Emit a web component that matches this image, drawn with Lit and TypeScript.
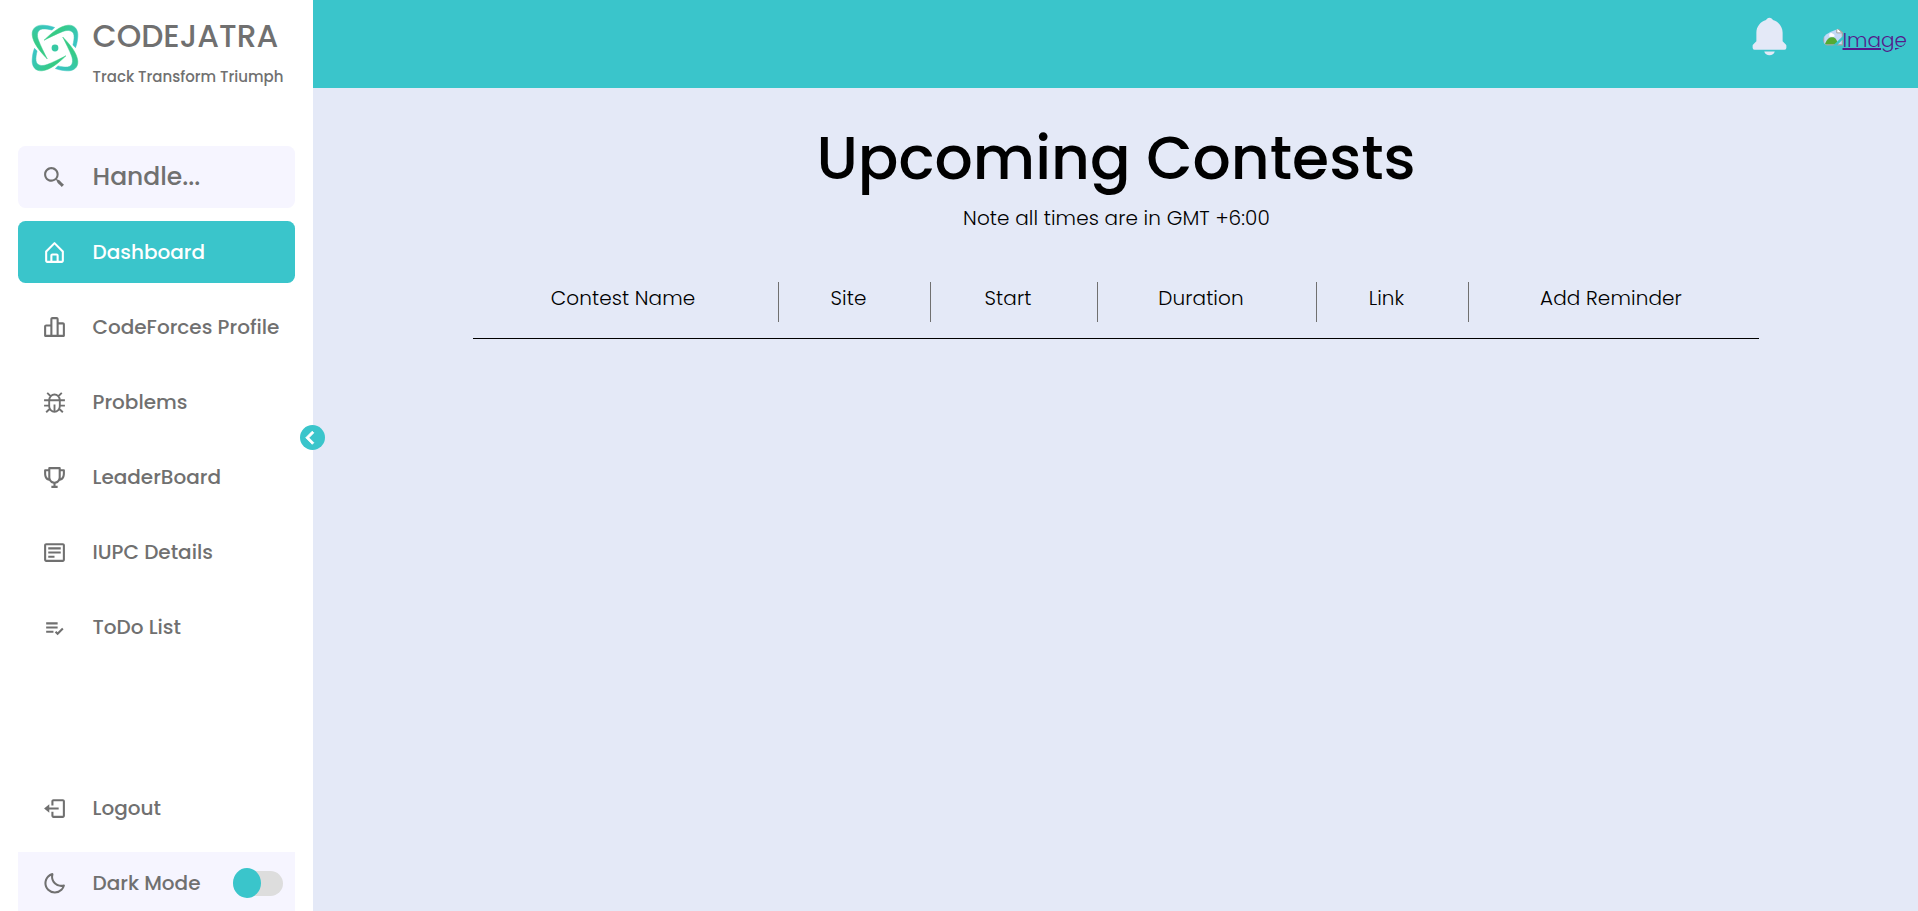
import { LitElement, html, css, svg } from 'lit';
import { customElement, property } from 'lit/decorators.js';
import { classMap } from 'lit/directives/class-map.js';

const ICONS: Record<string, string> = {
  search:
    'M19.023 16.977a35.13 35.13 0 0 1-1.367-1.384c-.372-.378-.596-.653-.596-.653l-2.8-1.337A6.962 6.962 0 0 0 16 9c0-3.859-3.14-7-7-7S2 5.141 2 9s3.14 7 7 7c1.763 0 3.37-.66 4.603-1.739l1.337 2.8s.275.224.653.596c.387.363.896.854 1.384 1.367l1.358 1.392.604.646 2.121-2.121-.646-.604c-.379-.372-.885-.866-1.391-1.36zM9 14c-2.757 0-5-2.243-5-5s2.243-5 5-5 5 2.243 5 5-2.243 5-5 5z',
  home:
    'M5 22h14c1.103 0 2-.897 2-2v-9a1 1 0 0 0-.293-.707l-8-8a1 1 0 0 0-1.414 0l-8 8A1 1 0 0 0 3 11v9c0 1.103.897 2 2 2zm5-2v-5h4v5h-4zm-5-8.586 7-7 7 7V20h-3v-5c0-1.103-.897-2-2-2h-4c-1.103 0-2 .897-2 2v5H5v-8.586z',
  chart:
    'M20 7h-4V4c0-1.103-.897-2-2-2h-4c-1.103 0-2 .897-2 2v5H4c-1.103 0-2 .897-2 2v9a1 1 0 0 0 1 1h18a1 1 0 0 0 1-1V9c0-1.103-.897-2-2-2zM4 11h4v8H4v-8zm6-1V4h4v15h-4v-9zm10 9h-4V9h4v10z',
  trophy:
    'M21 4h-3V3a1 1 0 0 0-1-1H7a1 1 0 0 0-1 1v1H3a1 1 0 0 0-1 1v3c0 4.31 1.799 6.91 4.819 7.012A6.001 6.001 0 0 0 11 17.91V20H9v2h6v-2h-2v-2.09a6.01 6.01 0 0 0 4.181-2.898C20.201 14.91 22 12.31 22 8V5a1 1 0 0 0-1-1zM4 8V6h2v6.83C4.216 12.078 4 9.299 4 8zm8 8c-2.206 0-4-1.794-4-4V4h8v8c0 2.206-1.794 4-4 4zm6-3.17V6h2v2c0 1.299-.216 4.078-2 4.83z',
  detail:
    'M20 3H4c-1.103 0-2 .897-2 2v14c0 1.103.897 2 2 2h16c1.103 0 2-.897 2-2V5c0-1.103-.897-2-2-2zM4 19V5h16l.002 14H4zM6 7h12v2H6zm0 4h12v2H6zm0 4h6v2H6z',
  todo:
    'M4 7h11v2H4zm0 4h11v2H4zm0 4h7v2H4zm15.299-2.708-4.3 4.291-1.292-1.291-1.414 1.415 2.706 2.704 5.712-5.703z',
  logout:
    'M16 13v-2H7V8l-5 4 5 4v-3zM20 3h-9c-1.103 0-2 .897-2 2v4h2V5h9v14h-9v-4H9v4c0 1.103.897 2 2 2h9c1.103 0 2-.897 2-2V5c0-1.103-.897-2-2-2z',
  moon:
    'M20.742 13.045a8.088 8.088 0 0 1-2.077.271c-2.135 0-4.14-.83-5.646-2.336a8.025 8.025 0 0 1-2.064-7.723A1 1 0 0 0 9.73 2.034a10.014 10.014 0 0 0-4.489 2.582c-3.898 3.898-3.898 10.243 0 14.143a9.937 9.937 0 0 0 7.072 2.93 9.93 9.93 0 0 0 7.07-2.929 10.007 10.007 0 0 0 2.583-4.491 1.001 1.001 0 0 0-1.224-1.224zm-2.772 4.301a7.947 7.947 0 0 1-5.656 2.343 7.953 7.953 0 0 1-5.658-2.344c-3.118-3.119-3.118-8.195 0-11.314a7.923 7.923 0 0 1 2.06-1.483 10.027 10.027 0 0 0 2.89 7.848 9.972 9.972 0 0 0 7.848 2.891 8.036 8.036 0 0 1-1.484 2.059z',
  bell:
    'M12 22a2.98 2.98 0 0 0 2.818-2H9.182A2.98 2.98 0 0 0 12 22zm7-7.414V10c0-3.217-2.185-5.927-5.145-6.742C13.562 2.52 12.846 2 12 2s-1.562.52-1.855 1.258C7.184 4.073 5 6.783 5 10v4.586l-1.707 1.707A.996.996 0 0 0 3 17v1a1 1 0 0 0 1 1h16a1 1 0 0 0 1-1v-1a.996.996 0 0 0-.293-.707L19 14.586z',
  chevron: 'M13.293 6.293 7.586 12l5.707 5.707 1.414-1.414L10.414 12l4.293-4.293z',
};

@customElement('app-icon')
class AppIcon extends LitElement {
  @property() name = '';

  static styles = css`
    :host { display: block; width: 25px; height: 25px; }
    svg { display: block; width: 100%; height: 100%; fill: currentColor; }
    .line { fill: none; stroke: currentColor; stroke-width: 1.8; }
    .bold { stroke: currentColor; stroke-width: 0.7; }
  `;

  render() {
    return html`<svg viewBox="0 0 24 24">
      ${this.name === 'bug'
        ? svg`<path class="line" d="M6.900 10v5.500a5.100 5.500 0 0 0 10.200 0v-5.500M2 9.800h20M7 9.500a5 5.200 0 0 1 10 0M8.600 6.200 5 2.800M15.400 6.200 19 2.800M12 14v7M2 15h5M17 15h5M7.800 17.800l-3.800 3.600M16.200 17.800l3.800 3.600"></path>`
        : svg`<path class=${this.name === 'chevron' ? 'bold' : ''} d=${ICONS[this.name]}></path>`}
    </svg>`;
  }
}

@customElement('app-logo')
class AppLogo extends LitElement {
  static styles = css`
    :host { display: block; width: 50px; height: 50px; }
    svg { display: block; width: 100%; height: 100%; }
    .blade { fill: url(#g); stroke: url(#g); stroke-width: 0.5; }
  `;

  render() {
    return html`<svg viewBox="-25 -25 50 50">
      <defs>
        <linearGradient id="g" gradientUnits="userSpaceOnUse" x1="5" y1="-20" x2="22" y2="-6">
          <stop offset="0" stop-color="#36cb86"></stop>
          <stop offset="1" stop-color="#3ac5c4"></stop>
        </linearGradient>
      </defs>
      ${[0, 90, 180, 270].map(
        (a) => svg`<path class="blade" transform="rotate(${a})"
          d="M-11-7.700C-3-15.500 5-22 13-22.800C20-23.400 23.400-18 22.800-11.500C22.500-7 21.800-3.500 20.500-.3L17.900-3C18.700-6.500 19.300-9.500 19-12.500C18.400-17.800 13-18.400 8-16.600C2-14.300-5-10.800-11-7.700Z"></path>`,
      )}
      <circle r="3.4" fill="#38c9a4"></circle>
    </svg>`;
  }
}

const NAV = [
  { icon: 'home', label: 'Dashboard', active: true },
  { icon: 'chart', label: 'CodeForces Profile' },
  { icon: 'bug', label: 'Problems' },
  { icon: 'trophy', label: 'LeaderBoard' },
  { icon: 'detail', label: 'IUPC Details' },
  { icon: 'todo', label: 'ToDo List' },
];

const COLUMNS = ['Contest Name', 'Site', 'Start', 'Duration', 'Link', 'Add Reminder'];

@customElement('app-root')
class AppRoot extends LitElement {
  static styles = css`
    * { box-sizing: border-box; }
    :host {
      display: flex;
      height: 100vh;
      overflow: hidden;
      background: #e4e9f7;
      color: #000;
      font-family: Poppins, Inter, "Open Sans", sans-serif;
      font-size: 20px;
      font-weight: 300;
    }
    .sidebar {
      position: relative;
      flex: none;
      width: 313px;
      padding: 12px 18px 0;
      display: flex;
      flex-direction: column;
      background: #fff;
      color: #707070;
      font-weight: 500;
    }
    .brand { flex: none; display: flex; height: 134px; }
    .brand app-logo { margin: 11px 12.5px 0 12px; }
    .name { font-size: 31.25px; line-height: 48px; }
    .tagline { margin-top: 5px; font-size: 15px; line-height: 23px; white-space: nowrap; }
    .row {
      flex: none;
      display: flex;
      align-items: center;
      height: 62px;
      margin-bottom: 13px;
      border-radius: 7.5px;
      white-space: nowrap;
    }
    .row app-icon { flex: none; margin: 0 25.5px 0 24px; }
    .soft { background: #f6f5ff; }
    .search { font-size: 25px; }
    .active { background: #3ac5cb; color: #fff; }
    .bottom { margin-top: 106px; }
    .mode { border-radius: 0; margin: 0; }
    .switch {
      width: 50px;
      height: 25px;
      margin-left: 32.5px;
      display: flex;
      align-items: center;
      border-radius: 13px;
      background: #ddd;
    }
    .knob { width: 28px; height: 30px; flex: none; border-radius: 50%; background: #3ac5cb; }
    .collapse {
      position: absolute;
      top: 425px;
      right: -12px;
      width: 25px;
      height: 25px;
      border-radius: 50%;
      background: #3ac5cb;
      color: #fff;
      display: flex;
      align-items: center;
      justify-content: center;
    }
    .collapse app-icon { flex: none; width: 27.5px; height: 27.5px; margin-right: 3px; }
    .main { flex: 1; display: flex; flex-direction: column; align-items: center; }
    .topbar {
      align-self: stretch;
      height: 88px;
      padding: 14px 11px 0 0;
      display: flex;
      justify-content: flex-end;
      background: #3ac5cb;
    }
    .bell { width: 45px; height: 45px; color: #e4e9f7; }
    .avatar {
      margin: 12px 0 0 31px;
      height: 28px;
      display: flex;
      border-radius: 50%;
      overflow: hidden;
      color: #551a8b;
      text-decoration: underline;
      line-height: 28px;
    }
    .broken { width: 20px; height: 20px; }
    h1 { margin: 25px 0 0 1px; font-size: 60px; line-height: 90px; font-weight: 500; }
    .note { margin: 0 0 0 2px; line-height: 30px; letter-spacing: 0.1px; }
    .head {
      display: grid;
      grid-template-columns: 300px 152px 167px 219px 152px 296px;
      width: 1286px;
      height: 57px;
      margin-top: 49px;
      border-bottom: 1px solid #000;
      letter-spacing: 0.1px;
    }
    .cell { position: relative; text-align: center; line-height: 32px; }
    .cell:first-child, .cell:last-child { padding-left: 1px; }
    .cell:not(:last-child)::after {
      content: "";
      position: absolute;
      top: 0;
      right: -6px;
      width: 1px;
      height: 40px;
      background: #707070;
    }
  `;

  render() {
    return html`
      <nav class="sidebar">
        <div class="brand">
          <app-logo></app-logo>
          <div>
            <div class="name">CODEJATRA</div>
            <div class="tagline">Track Transform Triumph</div>
          </div>
        </div>
        <div class="row soft search"><app-icon name="search"></app-icon>Handle...</div>
        ${NAV.map(
          (n) => html`<div class=${classMap({ row: true, active: !!n.active })}>
            <app-icon name=${n.icon}></app-icon>${n.label}
          </div>`,
        )}
        <div class="row bottom"><app-icon name="logout"></app-icon>Logout</div>
        <div class="row soft mode">
          <app-icon name="moon"></app-icon>Dark Mode
          <div class="switch"><div class="knob"></div></div>
        </div>
        <div class="collapse"><app-icon name="chevron"></app-icon></div>
      </nav>
      <main class="main">
        <header class="topbar">
          <app-icon class="bell" name="bell"></app-icon>
          <a class="avatar">
            <svg class="broken" viewBox="0 -1 16 16">
              <path d="M.5.5h10.500l4.500 4v9.500H.5z" fill="#c3d9f7" stroke="#a3a3a3"></path>
              <path d="M11 .5v4h4.500z" fill="#fff" stroke="#a3a3a3" stroke-width=".8"></path>
              <path d="M5 6a1.600 1.600 0 0 1 3-.6 1.300 1.300 0 0 1 1 2.100h-4z" fill="#fff"></path>
              <path d="M1.500 13.500c1.500-4 3.500-5.500 6-5.500s3.500 2 4.500 5.500z" fill="#53ab34"></path>
              <path d="M8 14.500 16 7v2.500l-5 5z" fill="#3ac5cb"></path>
            </svg>
            <span>Image</span>
          </a>
        </header>
        <h1>Upcoming Contests</h1>
        <p class="note">Note all times are in GMT +6:00</p>
        <div class="head">${COLUMNS.map((c) => html`<div class="cell">${c}</div>`)}</div>
      </main>
    `;
  }
}
